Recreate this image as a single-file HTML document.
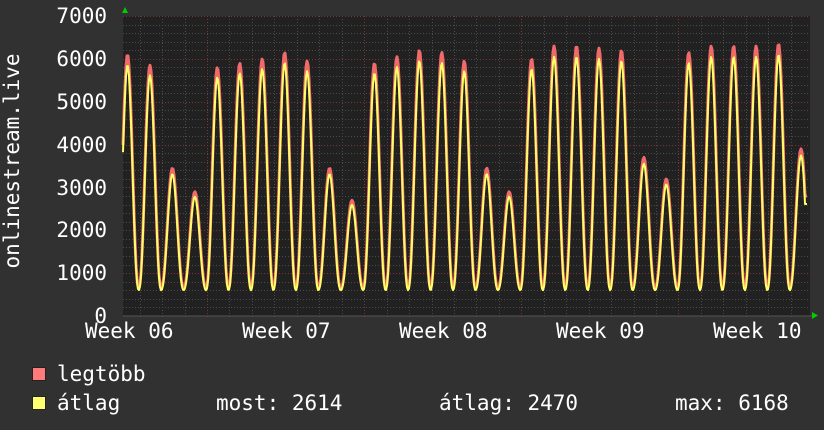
<!DOCTYPE html>
<html><head><meta charset="utf-8"><style>
html,body{margin:0;padding:0;background:#313131;}
body{width:824px;height:430px;overflow:hidden;position:relative;font-family:"DejaVu Sans Mono","Liberation Mono",monospace;color:#fff;}
.t{position:absolute;font-size:21px;line-height:22px;white-space:pre;}
.yl{right:717px;text-align:right;}
.sq{position:absolute;width:12px;height:12px;border:1px solid #222;}
</style></head><body>
<svg id="g" width="824" height="430" style="position:absolute;left:0;top:0">
<rect x="123" y="16" width="687" height="300" fill="#212121"/>
<g id="grid"></g>
<path id="red" fill="none" stroke="#f06a6a" stroke-width="3" stroke-linejoin="round"/>
<path id="yel" fill="none" stroke="#ffff66" stroke-width="2" stroke-linejoin="round"/>
<line x1="123" y1="316" x2="812" y2="316" stroke="#555" stroke-width="1"/>
<polygon points="122,13 128,13 125,7" fill="#00cc00"/>
<polygon points="812,312 812,319 818,315.5" fill="#00cc00"/>
</svg>
<div class="t yl" style="top:5px">7000</div>
<div class="t yl" style="top:48px">6000</div>
<div class="t yl" style="top:91px">5000</div>
<div class="t yl" style="top:134px">4000</div>
<div class="t yl" style="top:177px">3000</div>
<div class="t yl" style="top:219px">2000</div>
<div class="t yl" style="top:262px">1000</div>
<div class="t yl" style="top:305px">0</div>
<div class="t" style="left:-100px;top:150px;width:224px;text-align:center;transform:rotate(-90deg);transform-origin:center;">onlinestream.live</div>
<div class="t" style="left:85px;top:320px">Week 06</div>
<div class="t" style="left:242px;top:320px">Week 07</div>
<div class="t" style="left:399px;top:320px">Week 08</div>
<div class="t" style="left:556px;top:320px">Week 09</div>
<div class="t" style="left:713px;top:320px">Week 10</div>
<div class="sq" style="left:32px;top:367px;background:#ff7b7b"></div>
<div class="sq" style="left:32px;top:396px;background:#ffff70"></div>
<div class="t" style="left:57px;top:363px">legtöbb</div>
<div class="t" style="left:57px;top:392px">átlag</div>
<div class="t" style="left:216px;top:392px">most: 2614</div>
<div class="t" style="left:439px;top:392px">átlag: 2470</div>
<div class="t" style="left:675px;top:392px">max: 6168</div>
<script>
(function(){
var NS="http://www.w3.org/2000/svg",g=document.getElementById('grid');
function ln(x1,y1,x2,y2,c){var l=document.createElementNS(NS,'line');l.setAttribute('x1',x1);l.setAttribute('y1',y1);l.setAttribute('x2',x2);l.setAttribute('y2',y2);l.setAttribute('stroke',c);l.setAttribute('stroke-width',1);l.setAttribute('stroke-dasharray','1,2');g.appendChild(l);}
function Y(v){return 316-v*300/7000;}
for(var v=200;v<=7000;v+=200){var y=Math.round(Y(v))+0.5;ln(123,y,810,y,v%1000==0?'#7a3535':'#4a4a4a');}
for(var k=-4;k<30;k++){var x=207+22.45*k;if(x<124||x>810)continue;x=Math.round(x)+0.5;ln(x,16,x,318,(k%7==0)?'#7a3535':'#4a4a4a');}
var H=[6100,5850,3450,2900,5800,5900,6000,6150,5950,3450,2700,5900,6050,6200,6150,5950,3450,2900,6000,6300,6300,6250,6200,3700,3200,6150,6300,6300,6300,6350,3900];
var P0=127.5,S=22.45,MIN=620;
function c(u){return Math.pow((1+Math.cos(Math.PI*u))/2,1.15);}
function f(x,sc){var i=Math.floor((x-P0)/S);var t=(x-P0)/S-i;
 var a=i>=0&&i<H.length?H[i]:5000,b=i+1<H.length?H[i+1]:4000;if(i<0){a=4000;}
 var m=MIN*(sc<1?0.97:1.06);
 return t<0.5? m+(a*sc-m)*c(2*t) : m+(b*sc-m)*c(2-2*t);}
var r='',y2='';
for(var x=123;x<=807;x+=1){var vr=f(x,1),vy=f(x,0.96);
 if(x>=805){vr=2800;vy=2614;}
 r+=(x==123?'M':'L')+x+','+Y(vr).toFixed(1);y2+=(x==123?'M':'L')+x+','+Y(vy).toFixed(1);}
document.getElementById('red').setAttribute('d',r);
document.getElementById('yel').setAttribute('d',y2);
})();
</script>
</body></html>
